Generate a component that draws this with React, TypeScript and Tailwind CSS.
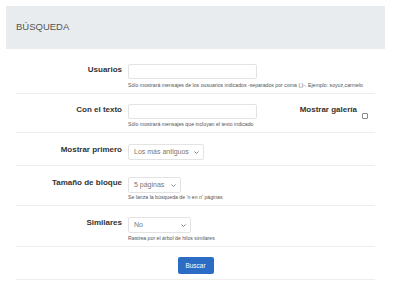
const Chevron = () => (
	<svg viewBox="0 0 10 6" className="h-[3px] w-[5px] shrink-0" fill="none" stroke="#777" strokeWidth="1.8">
		<path d="M1 1l4 4 4-4" />
	</svg>
);

const FakeSelect = ({ value, width }: { value: string; width: string }) => (
	<div
		className={`flex h-[16px] items-center justify-between rounded-[2px] border border-[#e3e3e3] bg-white pl-[5px] pr-[4px] text-[7px] whitespace-nowrap text-[#777] ${width}`}
	>
		<span>{value}</span>
		<Chevron />
	</div>
);

const Help = ({ children, top = "mt-[2px]" }: { children: string; top?: string }) => (
	<p className={`${top} text-[5.2px] leading-[6px] whitespace-nowrap text-[#555]`}>{children}</p>
);

const Row = ({
	label,
	pad = "pt-[10px]",
	children,
}: {
	label: string;
	pad?: string;
	children: React.ReactNode;
}) => (
	<div className={`flex border-b border-[#eeeeee] pb-[5px] ${pad}`}>
		<div className="w-[106px] pt-[1px] text-right text-[8px] leading-[10px] font-bold text-[#333]">
			{label}
		</div>
		<div className="ml-[6px] flex-1">{children}</div>
	</div>
);

export default function App() {
	return (
		<div className="h-[283px] w-[400px] overflow-hidden bg-white font-['Liberation_Sans',Arial,sans-serif]">
			<div className="pt-[6px] pl-[6px] pr-[15px]">
				<div className="flex h-[43px] items-center bg-[#e9ecef] pl-[10px] text-[9.5px] text-[#555]">
					BÚSQUEDA
				</div>
			</div>

			<div className="mx-[16px] mt-[5px] w-[359px]">
				<Row label="Usuarios">
					<div className="h-[15px] w-[129px] rounded-[2px] border border-[#e3e3e3] bg-white" />
					<Help top="mt-[3px]">Sólo mostrará mensajes de los ousuarios indicados -separados por coma (,)-. Ejemplo: soyuz,carmelo</Help>
				</Row>

				<Row label="Con el texto">
					<div className="flex">
						<div className="flex-1">
							<div className="h-[15px] w-[129px] rounded-[2px] border border-[#e3e3e3] bg-white" />
							<Help>Sólo mostrará mensajes que incluyan el texto indicado</Help>
						</div>
						<div className="flex items-start pr-[7px]">
							<span className="pt-[1px] text-[8px] leading-[10px] font-bold text-[#333]">Mostrar galería</span>
							<span className="mt-[9px] ml-[5px] h-[6px] w-[6px] rounded-[1px] border border-[#888] bg-white" />
						</div>
					</div>
				</Row>

				<Row label="Mostrar primero" pad="pt-[11px]">
					<FakeSelect value="Los más antiguos" width="w-[76px]" />
				</Row>

				<Row label="Tamaño de bloque" pad="pt-[11px]">
					<FakeSelect value="5 páginas" width="w-[53px]" />
					<Help top="mt-[1px]">Se lanza la búsqueda de 'n en n' páginas</Help>
				</Row>

				<Row label="Similares" pad="pt-[11px]">
					<FakeSelect value="No" width="w-[63px]" />
					<Help>Rastrea por el árbol de hilos similares</Help>
				</Row>

				<div className="flex justify-center border-b border-[#eeeeee] pt-[10px] pb-[5px]">
					<button className="h-[17px] w-[36px] rounded-[2px] bg-[#2b6cc4] text-[6.5px] text-white">
						Buscar
					</button>
				</div>
			</div>
		</div>
	);
}
